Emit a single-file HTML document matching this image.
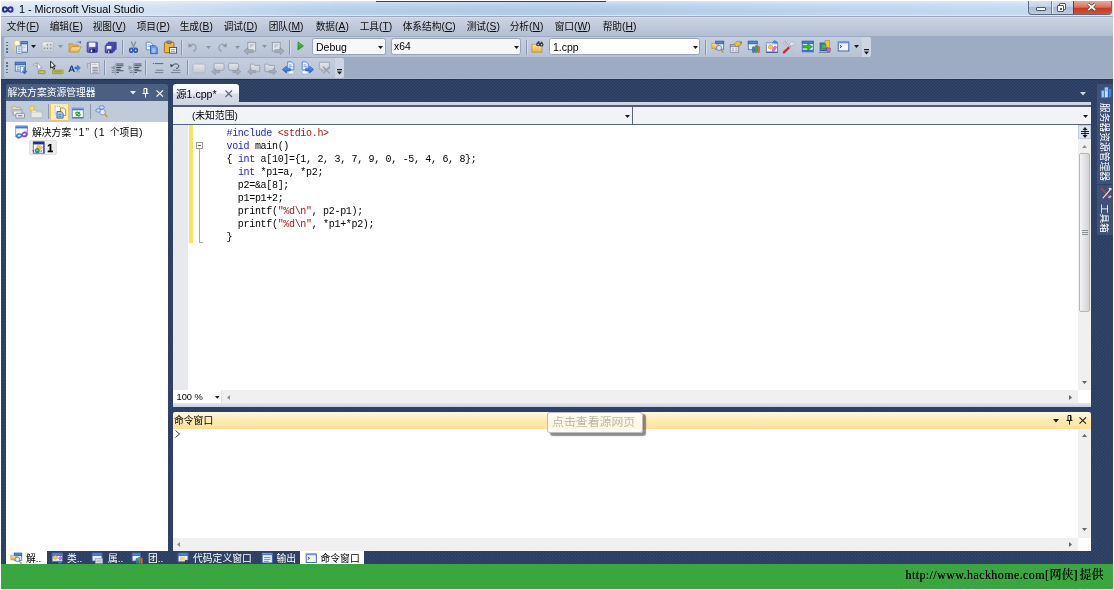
<!DOCTYPE html>
<html lang="zh-CN">
<head>
<meta charset="utf-8">
<title>1 - Microsoft Visual Studio</title>
<style>
*{box-sizing:border-box;margin:0;padding:0}
html,body{width:1114px;height:590px;overflow:hidden;background:#fff}
body{font-family:"Liberation Sans","Noto Sans CJK SC",sans-serif;font-size:9.8px;color:#000;position:relative}
body div,#w>span,body svg.ic,#w>pre{position:absolute}
#w{left:0;top:0;width:1114px;height:590px;will-change:transform}
svg.ic{overflow:visible}
.t{white-space:nowrap;line-height:14px;font-size:9.8px}
.m{white-space:nowrap;line-height:14px;font-size:9.7px;color:#0c0c0c}
.w{color:#fff}
#code{font-family:"Liberation Mono","Noto Sans CJK SC",monospace;font-size:10px;letter-spacing:-.32px;line-height:13px;white-space:pre;color:#000}
#code .k{color:#1a1ae6}#code .s{color:#a31515}
</style>
</head>
<body>
<div id="w">
<svg width="0" height="0" style="position:absolute"><defs>
<linearGradient id="gFold" x1="0" y1="0" x2="0" y2="1"><stop offset="0" stop-color="#fbe79a"/><stop offset="1" stop-color="#e3b43c"/></linearGradient>
<linearGradient id="gBlue" x1="0" y1="0" x2="1" y2="1"><stop offset="0" stop-color="#908ee4"/><stop offset="1" stop-color="#3b399c"/></linearGradient>
<linearGradient id="gWin" x1="0" y1="0" x2="0" y2="1"><stop offset="0" stop-color="#ffffff"/><stop offset="1" stop-color="#d5e1f5"/></linearGradient>
<linearGradient id="gTit" x1="0" y1="0" x2="0" y2="1"><stop offset="0" stop-color="#7aa7ea"/><stop offset="1" stop-color="#2f62c0"/></linearGradient>
<linearGradient id="gGray" x1="0" y1="0" x2="0" y2="1"><stop offset="0" stop-color="#e4e7ec"/><stop offset="1" stop-color="#c3c8d1"/></linearGradient>
<linearGradient id="gGreen" x1="0" y1="0" x2="0" y2="1"><stop offset="0" stop-color="#5fd34a"/><stop offset="1" stop-color="#1f8f1c"/></linearGradient>
<linearGradient id="gArrB" x1="0" y1="0" x2="0" y2="1"><stop offset="0" stop-color="#6fa4f0"/><stop offset="1" stop-color="#1c57c4"/></linearGradient>
</defs></svg>
<div style="left:1px;top:1px;width:1112px;height:16px;background:linear-gradient(90deg,#d6e4f3 0,#d0e0f1 14%,#b3ceea 30%,#abc9e8 50%,#b9d3ed 72%,#c6dbf0 100%)"></div>
<div style="left:1px;top:1px;width:1112px;height:16px;background:linear-gradient(180deg,rgba(255,255,255,.45) 0,rgba(255,255,255,.12) 30%,rgba(255,255,255,0) 60%,rgba(255,255,255,.1) 100%)"></div>
<div style="left:1px;top:15px;width:1112px;height:1px;background:#dde8f4"></div>
<div style="left:1px;top:16px;width:1112px;height:1px;background:#9aa7bd"></div>
<div style="left:376px;top:1px;width:229.5px;height:1px;background:#3d424b"></div>
<svg class="ic" style="left:2px;top:6px" width="11.5" height="7" viewBox="0 0 26 16"><path d="M13 8c-3-7-11-7-11 0s8 7 11 0z" fill="none" stroke="#232c86" stroke-width="4.4"/><path d="M13 8c3-7 11-7 11 0s-8 7-11 0z" fill="none" stroke="#3a2a90" stroke-width="4.4"/></svg>
<span class="t" style="left:19px;top:2px;font-size:10.8px;line-height:14px;color:#000">1 - Microsoft Visual Studio</span>
<div style="left:1028px;top:1px;width:84px;height:13.5px;border:1px solid #5d6b80;border-top:0;border-radius:0 0 4px 4px;background:linear-gradient(180deg,#d6e2f0 0,#c2d2e6 45%,#a9bdd6 50%,#bccde2 100%);overflow:hidden"><div style="left:22px;top:0;width:1px;height:14px;background:#6d7b90"></div><div style="left:23px;top:0;width:1px;height:14px;background:#e6eef8"></div><div style="left:44px;top:0;width:39px;height:14px;background:linear-gradient(180deg,#e9a99a 0,#d9705a 45%,#c43a20 50%,#d4583a 100%);border-left:1px solid #6d3b30"></div><div style="left:7px;top:6px;width:9.5px;height:3.5px;background:#fff;border:1px solid #4d586a;border-radius:1px"></div><div style="left:30px;top:2px;width:7px;height:7px;background:#fff;border:1px solid #4d586a;border-radius:1px"></div><div style="left:28px;top:4px;width:7px;height:7px;background:#fff;border:1px solid #4d586a;border-radius:1px"></div><div style="left:30.5px;top:6.5px;width:2px;height:2px;background:#4d586a"></div><svg class="ic" style="left:58px;top:2px" width="9.5" height="8" viewBox="0 0 11 9"><path d="M1.5 1l8 7M9.5 1l-8 7" stroke="#5a2a22" stroke-width="3.4"/><path d="M1.5 1l8 7M9.5 1l-8 7" stroke="#fff" stroke-width="2"/></svg></div>
<div style="left:1px;top:17px;width:1112px;height:19px;background:linear-gradient(180deg,#ccd5e3 0,#c2ccdc 40%,#b2bed1 100%)"></div>
<div style="left:1px;top:17px;width:1112px;height:1px;background:#d5dde9"></div>
<span class="m" style="left:6.7px;top:20px;">文件<span style="font-size:10.3px">(<u>F</u>)</span></span>
<span class="m" style="left:49.7px;top:20px;">编辑<span style="font-size:10.3px">(<u>E</u>)</span></span>
<span class="m" style="left:92.7px;top:20px;">视图<span style="font-size:10.3px">(<u>V</u>)</span></span>
<span class="m" style="left:136.7px;top:20px;">项目<span style="font-size:10.3px">(<u>P</u>)</span></span>
<span class="m" style="left:179.7px;top:20px;">生成<span style="font-size:10.3px">(<u>B</u>)</span></span>
<span class="m" style="left:223.7px;top:20px;">调试<span style="font-size:10.3px">(<u>D</u>)</span></span>
<span class="m" style="left:268.7px;top:20px;">团队<span style="font-size:10.3px">(<u>M</u>)</span></span>
<span class="m" style="left:315.7px;top:20px;">数据<span style="font-size:10.3px">(<u>A</u>)</span></span>
<span class="m" style="left:359.7px;top:20px;">工具<span style="font-size:10.3px">(<u>T</u>)</span></span>
<span class="m" style="left:402.7px;top:20px;">体系结构<span style="font-size:10.3px">(<u>C</u>)</span></span>
<span class="m" style="left:466.7px;top:20px;">测试<span style="font-size:10.3px">(<u>S</u>)</span></span>
<span class="m" style="left:509.7px;top:20px;">分析<span style="font-size:10.3px">(<u>N</u>)</span></span>
<span class="m" style="left:554.7px;top:20px;">窗口<span style="font-size:10.3px">(<u>W</u>)</span></span>
<span class="m" style="left:602.7px;top:20px;">帮助<span style="font-size:10.3px">(<u>H</u>)</span></span>
<div style="left:1px;top:36px;width:1112px;height:43px;background:#9dabc3"></div>
<div style="left:4px;top:36.5px;width:867px;height:20px;background:linear-gradient(180deg,#c4cede 0,#bdc8d9 60%,#b7c2d5 100%);border-radius:2.5px"></div>
<div style="left:862px;top:36.5px;width:9px;height:20px;background:#cdd5e3;border-radius:0 2.5px 2.5px 0"></div>
<div style="left:4px;top:58px;width:339.5px;height:19.5px;background:linear-gradient(180deg,#c4cede 0,#bdc8d9 60%,#b7c2d5 100%);border-radius:2.5px"></div>
<div style="left:335px;top:58px;width:8.5px;height:19.5px;background:#cdd5e3;border-radius:0 2.5px 2.5px 0"></div>
<div style="left:6.3px;top:41.5px;width:1.6px;height:1.6px;background:#5f6d88"></div>
<div style="left:6.3px;top:44.8px;width:1.6px;height:1.6px;background:#5f6d88"></div>
<div style="left:6.3px;top:48.1px;width:1.6px;height:1.6px;background:#5f6d88"></div>
<div style="left:6.3px;top:51.4px;width:1.6px;height:1.6px;background:#5f6d88"></div>
<div style="left:6.3px;top:62.0px;width:1.6px;height:1.6px;background:#5f6d88"></div>
<div style="left:6.3px;top:65.3px;width:1.6px;height:1.6px;background:#5f6d88"></div>
<div style="left:6.3px;top:68.6px;width:1.6px;height:1.6px;background:#5f6d88"></div>
<div style="left:6.3px;top:71.9px;width:1.6px;height:1.6px;background:#5f6d88"></div>
<svg class="ic" style="left:13.5px;top:39.5px;" width="13.5" height="13.5" viewBox="0 0 16 16"><rect x=".6" y=".6" width="7" height="12.4" rx=".8" fill="#f2d768"/><circle cx="3.8" cy="3.8" r="2.6" fill="#fffbe0"/><circle cx="3.8" cy="3.8" r="1.3" fill="#fff"/><rect x="8.3" y="2" width="7.7" height="12.4" fill="url(#gWin)" stroke="#35579f" stroke-width=".9"/><rect x="8.3" y="2" width="7.7" height="2.8" fill="url(#gTit)" stroke="#35579f" stroke-width=".6"/><path d="M10 7h4.5M10 9h4.5" stroke="#9bb4e0" stroke-width=".7"/><rect x="3" y="7.2" width="6.3" height="8.6" rx=".6" fill="#eaf1fc" stroke="#5a7fc8" stroke-width=".9"/><path d="M4.5 9.5h3.3M4.5 11.5h3.3M4.5 13.5h3.3" stroke="#6a8fd8" stroke-width=".9"/></svg>
<svg class="ic" style="left:31px;top:45px" width="5" height="3" viewBox="0 0 5 3"><path d="M0 0h5L2.5 3z" fill="#1a1a1a"/></svg>
<svg class="ic" style="left:41px;top:41px;" width="13" height="13" viewBox="0 0 16 16"><rect x="1.2" y=".800" width="13.8" height="12.4" rx=".6" fill="url(#gGray)" stroke="#b4b9c4" stroke-width=".8"/><path d="M3 3h3.5M3 4.8h2" stroke="#f4f5f8" stroke-width="1.1"/><circle cx="8" cy="4.5" r=".9" fill="#7d8492"/><circle cx="12" cy="4.5" r=".9" fill="#7d8492"/><circle cx="4.3" cy="9" r=".9" fill="#7d8492"/><circle cx="8" cy="9" r=".9" fill="#7d8492"/><circle cx="12" cy="9" r=".9" fill="#7d8492"/></svg>
<svg class="ic" style="left:58px;top:45px" width="5" height="3" viewBox="0 0 5 3"><path d="M0 0h5L2.5 3z" fill="#8a93a3"/></svg>
<svg class="ic" style="left:68px;top:40px;" width="13.5" height="13.5" viewBox="0 0 16 16"><path d="M1 4.5h4.5l1.2 1.5H12v2H4.5L1.5 14z" fill="#e5b93f" stroke="#b98a1c" stroke-width=".8"/><path d="M4.2 8h11.3l-3 6.3H1.3z" fill="url(#gFold)" stroke="#b98a1c" stroke-width=".8"/><path d="M10 3.2c1.5-1.6 3.3-1.5 4.3-.2" fill="none" stroke="#7d90bc" stroke-width="1.1"/><path d="M15.6 1l-.3 3.3-3-1.2z" fill="#5d74ac"/></svg>
<svg class="ic" style="left:85.7px;top:40.5px;" width="12.5" height="12.5" viewBox="0 0 16 16"><rect x="1.5" y="1.5" width="13" height="13" rx="1" fill="url(#gBlue)" stroke="#2f2d86"/><rect x="4" y="2" width="8" height="5.5" fill="#f4f6ff"/><rect x="4.5" y="10" width="7" height="4.5" fill="#1b1e6e"/><rect x="6" y="11" width="2" height="3" fill="#f0f0ff"/></svg>
<svg class="ic" style="left:103.5px;top:40.5px;" width="13" height="13" viewBox="0 0 16 16"><path d="M5 1.5h10v9l-2 0v-7h-8z" fill="#4a50c0" stroke="#2f2d86" stroke-width=".8"/><path d="M3 3.5h10v9h-2v-7H3z" fill="#5a60d0" stroke="#2f2d86" stroke-width=".8"/><rect x="1.5" y="5.5" width="9.5" height="9" rx=".8" fill="url(#gBlue)" stroke="#2f2d86"/><rect x="3.5" y="6" width="5.5" height="3.5" fill="#f4f6ff"/><rect x="4" y="11.5" width="5" height="3" fill="#1b1e6e"/><rect x="5" y="12" width="1.6" height="2.4" fill="#f0f0ff"/></svg>
<div style="left:121.5px;top:39.5px;width:1px;height:15px;background:#8996ad"></div>
<div style="left:122.5px;top:39.5px;width:1px;height:15px;background:#d3dae6"></div>
<svg class="ic" style="left:127px;top:40.5px;" width="13" height="13" viewBox="0 0 16 16"><path d="M5.2 0.5L8.6 8.5M10.8 .5L7.4 8.5" stroke="#848d9e" stroke-width="1.7" fill="none"/><ellipse cx="5.3" cy="11.3" rx="2.2" ry="2.7" fill="#5a7cd0" stroke="#2f52b0" stroke-width="1.5"/><ellipse cx="10.7" cy="11.3" rx="2.2" ry="2.7" fill="#5a7cd0" stroke="#2f52b0" stroke-width="1.5"/><circle cx="5.3" cy="11.6" r=".8" fill="#cfdcf6"/><circle cx="10.7" cy="11.6" r=".8" fill="#cfdcf6"/></svg>
<svg class="ic" style="left:145px;top:40.5px;" width="13.5" height="13.5" viewBox="0 0 16 16"><path d="M1.5 1.5h5l2.5 2.5v6.5h-7.5z" fill="#f2f6fd" stroke="#5b82c8"/><path d="M3 4.5h3M3 6.5h4" stroke="#7b9bd6" stroke-width=".9"/><path d="M6.5 5.5h5.5l2.5 2.5v7h-8z" fill="#6c9bea" stroke="#2d5fc0"/><path d="M8.5 9.5h4M8.5 11.5h4M8.5 13h3" stroke="#dbe7fb" stroke-width=".9"/></svg>
<svg class="ic" style="left:163px;top:39.5px;" width="14" height="14" viewBox="0 0 16 16"><rect x="1.5" y="2.5" width="11" height="12" rx="1" fill="#e8b93a" stroke="#9a6a10"/><rect x="4.5" y="1" width="5" height="3" rx=".8" fill="#8b8f98" stroke="#50545c" stroke-width=".7"/><rect x="7.5" y="8.5" width="8" height="6.5" fill="#f7f9fd" stroke="#3e4a66"/><path d="M9 11h5M9 13h5" stroke="#7b8bb0" stroke-width=".9"/></svg>
<div style="left:181.0px;top:39.5px;width:1px;height:15px;background:#8996ad"></div>
<div style="left:182.0px;top:39.5px;width:1px;height:15px;background:#d3dae6"></div>
<svg class="ic" style="left:187px;top:41px;" width="12" height="12" viewBox="0 0 16 16"><path d="M3.5 6.5c3-3.5 8-2.5 8.5 1.5c.3 3-1.5 5-3.5 6" fill="none" stroke="#9aa3b3" stroke-width="1.8"/><path d="M1.5 2.5l.5 6 5.5-1.5z" fill="#8d96a8"/></svg>
<svg class="ic" style="left:206px;top:45.5px" width="5" height="3" viewBox="0 0 5 3"><path d="M0 0h5L2.5 3z" fill="#8a93a3"/></svg>
<svg class="ic" style="left:215.5px;top:41px;" width="12" height="12" viewBox="0 0 16 16"><path d="M12.5 6.5c-3-3.5-8-2.5-8.5 1.5c-.3 3 1.5 5 3.5 6" fill="none" stroke="#9aa3b3" stroke-width="1.8"/><path d="M14.5 2.5l-.5 6-5.5-1.5z" fill="#8d96a8"/></svg>
<svg class="ic" style="left:234.5px;top:45.5px" width="5" height="3" viewBox="0 0 5 3"><path d="M0 0h5L2.5 3z" fill="#8a93a3"/></svg>
<svg class="ic" style="left:243px;top:40.5px;" width="14" height="14" viewBox="0 0 16 16"><rect x="5.5" y="1.5" width="9" height="10" fill="#dfe3ea" stroke="#8e96a6"/><path d="M8 4.5h4M8 6.5h2" stroke="#a0a7b4"/><path d="M1 11.5l4.5-4v2.5h6v3h-6v2.5z" fill="#a4abb9" stroke="#868e9e" stroke-width=".7"/></svg>
<svg class="ic" style="left:261.5px;top:45px" width="5" height="3" viewBox="0 0 5 3"><path d="M0 0h5L2.5 3z" fill="#8a93a3"/></svg>
<svg class="ic" style="left:270.5px;top:40.5px;" width="14" height="14" viewBox="0 0 16 16"><rect x="1.5" y="1.5" width="9" height="10" fill="#dfe3ea" stroke="#8e96a6"/><path d="M4 4.5h4M4 6.5h2" stroke="#a0a7b4"/><path d="M15 11.5l-4.5-4v2.5h-6v3h6v2.5z" fill="#a4abb9" stroke="#868e9e" stroke-width=".7"/></svg>
<div style="left:288.5px;top:39.5px;width:1px;height:15px;background:#8996ad"></div>
<div style="left:289.5px;top:39.5px;width:1px;height:15px;background:#d3dae6"></div>
<svg class="ic" style="left:295px;top:40.3px;" width="11.8" height="11.8" viewBox="0 0 16 16"><path d="M4 2.5l7.5 5.5-7.5 5.5z" fill="url(#gGreen)" stroke="#1c7a18" stroke-width=".8"/></svg>
<div style="left:312.3px;top:38.3px;width:73.4px;height:17.2px;border:1px solid #97a4bc;border-radius:2.5px;background:#f6f8fb"></div>
<span class="t" style="left:316px;top:40px;font-size:10.5px;line-height:14px">Debug</span>
<svg class="ic" style="left:377.5px;top:45.5px" width="5" height="3" viewBox="0 0 5 3"><path d="M0 0h5L2.5 3z" fill="#1a1a1a"/></svg>
<div style="left:390.8px;top:38.3px;width:129.9px;height:17.2px;border:1px solid #97a4bc;border-radius:2.5px;background:#f4f6fa"></div>
<span class="t" style="left:394px;top:40px;font-size:10.3px;line-height:14px">x64</span>
<svg class="ic" style="left:513.5px;top:45.5px" width="5" height="3" viewBox="0 0 5 3"><path d="M0 0h5L2.5 3z" fill="#1a1a1a"/></svg>
<div style="left:526.0px;top:39.5px;width:1px;height:15px;background:#8996ad"></div>
<div style="left:527.0px;top:39.5px;width:1px;height:15px;background:#d3dae6"></div>
<svg class="ic" style="left:531px;top:40px;" width="13.5" height="13.5" viewBox="0 0 16 16"><path d="M1 5h4.5l1.2 1.5H13v8H1z" fill="url(#gFold)" stroke="#b98a1c" stroke-width=".8"/><circle cx="8.5" cy="5" r="2.3" fill="#30343c"/><circle cx="12.5" cy="5.5" r="2.3" fill="#30343c"/><rect x="8" y="1.5" width="2" height="3" fill="#30343c"/><rect x="11.5" y="2" width="2" height="3" fill="#30343c"/><circle cx="8.5" cy="5.2" r=".9" fill="#cfe0ff"/><circle cx="12.5" cy="5.7" r=".9" fill="#cfe0ff"/></svg>
<div style="left:549.3px;top:38.3px;width:150.9px;height:17.2px;border:1px solid #97a4bc;border-radius:2.5px;background:#fff"></div>
<span class="t" style="left:553px;top:40px;font-size:10.5px;line-height:14px">1.cpp</span>
<svg class="ic" style="left:693px;top:45.5px" width="5" height="3" viewBox="0 0 5 3"><path d="M0 0h5L2.5 3z" fill="#1a1a1a"/></svg>
<div style="left:705.0px;top:39.5px;width:1px;height:15px;background:#8996ad"></div>
<div style="left:706.0px;top:39.5px;width:1px;height:15px;background:#d3dae6"></div>
<svg class="ic" style="left:711px;top:39.5px;" width="13.5" height="13.5" viewBox="0 0 16 16"><rect x="5.5" y="1.5" width="9.5" height="9.5" fill="url(#gWin)" stroke="#4f74b8" stroke-width="1"/><rect x="5.5" y="1.5" width="9.5" height="3" fill="url(#gTit)" stroke="#3560b4" stroke-width="1"/><path d="M1 4h4l1 1.2h3v4.8H1z" fill="url(#gFold)" stroke="#b98a1c" stroke-width=".7"/><circle cx="9.5" cy="9.5" r="3" fill="#d9ecfb" fill-opacity=".85" stroke="#5a86c8" stroke-width="1.1"/><path d="M11.8 11.8l3 3" stroke="#c8922a" stroke-width="1.8"/></svg>
<svg class="ic" style="left:728.5px;top:39.5px;" width="13.5" height="13.5" viewBox="0 0 16 16"><rect x="1.5" y="5.5" width="10" height="9" fill="#eef0f4" stroke="#7d8696"/><rect x="1.5" y="5.5" width="10" height="2.5" fill="#aab2c2" stroke="#7d8696"/><path d="M3.5 10.5h2.5M3.5 12.5h2.5M7.5 10.5h2.5M7.5 12.5h2.5" stroke="#8d96a6"/><path d="M6.5 4.5c1-2.5 4-3.5 6.5-2.5l2 1-1.5 3.5c-2 .5-3.5.5-5 1.5z" fill="#e9c04a" stroke="#a87c18" stroke-width=".7"/><path d="M13 1.5l2.5 1-1.2 3z" fill="#3c9a3a"/></svg>
<svg class="ic" style="left:746.5px;top:39.5px;" width="13.5" height="13.5" viewBox="0 0 16 16"><rect x="1.5" y="1.5" width="10.5" height="10" fill="url(#gWin)" stroke="#4f74b8" stroke-width="1"/><rect x="1.5" y="1.5" width="10.5" height="3" fill="url(#gTit)" stroke="#3560b4" stroke-width="1"/><rect x="6.5" y="8" width="2.4" height="7" rx="1" fill="#3f7fe0" stroke="#1f4fa8" stroke-width=".6"/><rect x="9.5" y="6.5" width="2.4" height="8.5" rx="1" fill="#4fb24a" stroke="#2a7a28" stroke-width=".6"/><rect x="12.5" y="7.5" width="2.4" height="7.5" rx="1" fill="#e2703a" stroke="#a8481c" stroke-width=".6"/></svg>
<svg class="ic" style="left:764.5px;top:39.5px;" width="13.5" height="13.5" viewBox="0 0 16 16"><rect x="1.5" y="3.5" width="13.5" height="11" fill="#f7f9fd" stroke="#5a74a8"/><path d="M1.5 14.5h13.5" stroke="#3d5080" stroke-width="1.3"/><rect x="1.5" y="3.5" width="13.5" height="2" fill="#c9d8f2"/><path d="M4 7.5l2.3-1.7 2.7 1.2.3 2.5-2.3 1.2-2.7-.8z" fill="#f0cc4e" stroke="#b08a14" stroke-width=".6"/><path d="M8.5 11.5l3-4.5 2.5 1.5-3 4.5-2.2.3z" fill="#e070e0" stroke="#a83aa8" stroke-width=".6"/><path d="M8.5 3.5l2.5-3 3 1.5 1 2z" fill="#4f8ae8" stroke="#2a5cc0" stroke-width=".5"/></svg>
<svg class="ic" style="left:782px;top:39.5px;" width="14" height="14" viewBox="0 0 16 16"><path d="M4 4L13.5 14" stroke="#aab2c0" stroke-width="2.2" stroke-linecap="round"/><path d="M4 4L13.5 14" stroke="#e9ecf1" stroke-width=".9" stroke-linecap="round"/><path d="M1.2 3.5c0-1.5 1.5-2.7 3-2.3l-1.5 1.7 1.2 1.2 1.7-1.5c.4 1.5-.8 3-2.3 3z" fill="#d3d8e0" stroke="#8d96a6" stroke-width=".5"/><path d="M2.2 14.2L8 8.5" stroke="#c8262a" stroke-width="2.6" stroke-linecap="round"/><path d="M8 8.5l2.5-2.5" stroke="#aab2c0" stroke-width="1.8"/><path d="M8.3 4.7l3-3.2 3.7 3.6-1.3 1.4-1.4-1.2-1.8 1.8z" fill="#e4e8ee" stroke="#8d96a6" stroke-width=".6"/></svg>
<svg class="ic" style="left:800.5px;top:39.5px;" width="13.5" height="13.5" viewBox="0 0 16 16"><rect x="1.5" y="1.5" width="13" height="12.5" fill="#e9f0fb" stroke="#2f5cb4"/><rect x="1.5" y="1.5" width="13" height="2.5" fill="url(#gTit)" stroke="#2f5cb4"/><rect x="1.5" y="11.5" width="13" height="2.5" fill="#3f6cc4"/><path d="M2.5 6.5h5.5v-2.5l5.5 4-5.5 4v-2.5h-5.5z" fill="#2fc02a" stroke="#147a12" stroke-width=".7"/></svg>
<svg class="ic" style="left:818px;top:39.5px;" width="13.5" height="13.5" viewBox="0 0 16 16"><rect x="2.5" y="3.5" width="8" height="9" fill="#3f8fd8" stroke="#1f559c"/><rect x="8.5" y=".8" width="5" height="8" fill="#f0c83a" stroke="#b08a14" stroke-width=".7"/><rect x="4.5" y="5.5" width="5" height="5" fill="#4fb44a" stroke="#2a7a28" stroke-width=".6"/><rect x="10.5" y="9.5" width="4" height="4" fill="#d55fd2" stroke="#94308f" stroke-width=".6"/><path d="M1 14.5h13.5" stroke="#6d6f8a" stroke-width="1.2"/></svg>
<svg class="ic" style="left:836.5px;top:40px;" width="13" height="13" viewBox="0 0 16 16"><rect x="1.5" y="2.5" width="13" height="11" fill="#f3f7fd" stroke="#3d63ad" stroke-width="1.2"/><rect x="1.5" y="2.5" width="13" height="1.6" fill="#6d93d8"/><path d="M3.5 6.5l2.2 1.6-2.2 1.6" fill="none" stroke="#20242c" stroke-width="1.1"/></svg>
<svg class="ic" style="left:853.5px;top:45px" width="5" height="3" viewBox="0 0 5 3"><path d="M0 0h5L2.5 3z" fill="#1a1a1a"/></svg>
<svg class="ic" style="left:863.5px;top:49px" width="5" height="6" viewBox="0 0 5 6"><path d="M0 .600h5" stroke="#1a1a1a" stroke-width="1.2"/><path d="M0 2.5h5L2.5 5.5z" fill="#1a1a1a"/></svg>
<svg class="ic" style="left:14px;top:60.5px;" width="13.5" height="13.5" viewBox="0 0 16 16"><rect x="1.5" y="1.5" width="12" height="10.5" fill="url(#gWin)" stroke="#4f74b8" stroke-width="1"/><rect x="1.5" y="1.5" width="12" height="3" fill="url(#gTit)" stroke="#3560b4" stroke-width="1"/><path d="M3.5 6h3M3.5 8h3M3.5 10h3" stroke="#5b82c8" stroke-width=".9"/><rect x="7.5" y="6.5" width="5" height="7" fill="#f5f8fd" stroke="#5b82c8" stroke-width=".8"/><path d="M13 8v4h-2l3 3.5 3-3.5h-2v-4z" transform="translate(-1.5 0)" fill="url(#gArrB)" stroke="#1c4fa8" stroke-width=".5"/></svg>
<svg class="ic" style="left:32px;top:60.5px;" width="13.5" height="13.5" viewBox="0 0 16 16"><path d="M1.5 3.5h4v-2l3 3-3 3v-2h-4z" fill="#dfe4ec" stroke="#8d96a6" stroke-width=".7"/><path d="M6.5 2.5l5.5 5.5h-2.5l1.5 3-1.3.600-1.5-3-1.7 1.7z" fill="#fff" stroke="#8d96a6" stroke-width=".8"/><rect x="7.5" y="11.5" width="8" height="3.5" rx=".6" fill="#c8c860" stroke="#7c7c2a" stroke-width=".8"/></svg>
<svg class="ic" style="left:50px;top:60.5px;" width="13.5" height="13.5" viewBox="0 0 16 16"><path d="M.800 .300l5.6 5.8h-2.5l1.6 3.3-1.3.600-1.6-3.3-1.8 1.7z" fill="#fff" stroke="#10141c" stroke-width="1.1"/><rect x="3" y="10.8" width="12.5" height="4.2" rx=".6" fill="#c4d040" stroke="#7c862a" stroke-width=".8"/><path d="M5 12.9h8.5" stroke="#6a7420" stroke-width=".9"/></svg>
<svg class="ic" style="left:68px;top:61px;" width="13" height="13" viewBox="0 0 16 16"><path d="M.500 13.5L3.7 5.5h1.6L8.5 13.5h-1.8l-.7-1.9H3l-.7 1.9z M3.5 10.2h2L4.5 7.4z" fill="#1f3a8a" fill-rule="evenodd"/><path d="M8.5 7.3h3v-2.2l3.8 3.4-3.8 3.4v-2.2h-3z" fill="#3f7fe0" stroke="#1c4fa8" stroke-width=".5"/><path d="M9.5 13.3h5" stroke="#8d96a6" stroke-width=".8"/></svg>
<svg class="ic" style="left:86px;top:60.5px;" width="13.5" height="13.5" viewBox="0 0 16 16"><path d="M1.5 3v6" stroke="#969eac"/><path d="M1.5 3h3" stroke="#969eac"/><rect x="5.5" y="1.5" width="10" height="13.5" fill="#eceef2" stroke="#969eac"/><path d="M7 4h6" stroke="#b4bac6"/><path d="M7.5 7.5h6.5M7.5 9.5h6.5M7.5 11.5h6.5M7.5 13.3h6.5" stroke="#7d8492" stroke-width="1.1"/></svg>
<div style="left:103.8px;top:60px;width:1px;height:15px;background:#8996ad"></div>
<div style="left:104.8px;top:60px;width:1px;height:15px;background:#d3dae6"></div>
<svg class="ic" style="left:110px;top:61.5px;" width="13.5" height="13.5" viewBox="0 0 16 16"><path d="M6.5 .500v15" stroke="#5d6676" stroke-width=".7" stroke-dasharray="1 1"/><path d="M7.5 2.5h8.5M7.5 4.5h8.5M7.5 6.5h6M7.5 8.5h5M7.5 10.5h8.5M7.5 12.5h3" stroke="#474f5e" stroke-width="1.2"/><path d="M2 10.5h3.5M2 12.5h3.5" stroke="#7d8696" stroke-width="1.2"/><path d="M5.7 4.2v5l-5-2.5z" fill="#8a93a3"/></svg>
<svg class="ic" style="left:128px;top:61.5px;" width="13.5" height="13.5" viewBox="0 0 16 16"><path d="M6.5 .500v15" stroke="#5d6676" stroke-width=".7" stroke-dasharray="1 1"/><path d="M7.5 2.5h8.5M7.5 4.5h8.5M7.5 6.5h6M7.5 8.5h5M7.5 10.5h8.5M7.5 12.5h3" stroke="#474f5e" stroke-width="1.2"/><path d="M2 10.5h3.5M2 12.5h3.5" stroke="#7d8696" stroke-width="1.2"/><path d="M.700 4.2v5l5-2.5z" fill="#8a93a3"/></svg>
<div style="left:144.8px;top:60px;width:1px;height:15px;background:#8996ad"></div>
<div style="left:145.8px;top:60px;width:1px;height:15px;background:#d3dae6"></div>
<svg class="ic" style="left:151.5px;top:62px;" width="12.5" height="12.5" viewBox="0 0 16 16"><path d="M1 2h1.5M3.5 2h11" stroke="#4d5666" stroke-width="1.1"/><path d="M5 10.5h9.5M3.5 13.5h11" stroke="#6d7686" stroke-width="1.1"/></svg>
<svg class="ic" style="left:169px;top:62px;" width="12.5" height="12.5" viewBox="0 0 16 16"><path d="M4 5.5c1.5-4 8-4 8.5-.5c.3 2.5-2 3.5-3.5 3" fill="none" stroke="#3d4656" stroke-width="1.2"/><path d="M1.5 2.5l.8 4.5 3.7-2.8z" fill="#3d4656"/><path d="M5 10.5h9.5M2.5 13.5h12" stroke="#6d7686" stroke-width="1.1"/></svg>
<div style="left:186.8px;top:60px;width:1px;height:15px;background:#8996ad"></div>
<div style="left:187.8px;top:60px;width:1px;height:15px;background:#d3dae6"></div>
<svg class="ic" style="left:192px;top:61.5px;" width="14" height="13" viewBox="0 0 16 16"><rect x=".500" y="2.5" width="15" height="11" rx="2" fill="url(#gGray)" stroke="#aab0bd"/></svg>
<svg class="ic" style="left:210.5px;top:61.5px;" width="13.5" height="13.5" viewBox="0 0 16 16"><rect x="3.5" y="1.5" width="12" height="8.5" rx="2" fill="url(#gGray)" stroke="#969eac"/><path d="M.800 11.5l4.2-3.7v2.4h5v2.6h-5v2.4z" fill="#a4abb9" stroke="#868e9e" stroke-width=".6"/></svg>
<svg class="ic" style="left:228px;top:61.5px;" width="13.5" height="13.5" viewBox="0 0 16 16"><rect x=".500" y="1.5" width="12" height="8.5" rx="2" fill="url(#gGray)" stroke="#969eac"/><path d="M15.2 11.5l-4.2-3.7v2.4h-5v2.6h5v2.4z" fill="#a4abb9" stroke="#868e9e" stroke-width=".6"/></svg>
<svg class="ic" style="left:246.5px;top:61.5px;" width="13.5" height="13.5" viewBox="0 0 16 16"><path d="M4 2.5h4l1 1.5h6v7.5H4z" fill="url(#gGray)" stroke="#969eac"/><path d="M.800 11.5l4.2-3.7v2.4h5v2.6h-5v2.4z" fill="#a4abb9" stroke="#868e9e" stroke-width=".6"/></svg>
<svg class="ic" style="left:264px;top:61.5px;" width="13.5" height="13.5" viewBox="0 0 16 16"><path d="M1 2.5h4l1 1.5h6.5v7.5H1z" fill="url(#gGray)" stroke="#969eac"/><path d="M15.2 11.5l-4.2-3.7v2.4h-5v2.6h5v2.4z" fill="#a4abb9" stroke="#868e9e" stroke-width=".6"/></svg>
<svg class="ic" style="left:282px;top:60.5px;" width="14" height="14" viewBox="0 0 16 16"><path d="M6.5 1h4.5l2.5 2.5v6.5h-7z" fill="#eef4fd" stroke="#3f72d0" stroke-width=".9"/><path d="M8 4.5h3M8 6.5h4" stroke="#5b8be0" stroke-width=".9"/><rect x="7" y="11" width="6.5" height="3.8" rx=".8" fill="#fff" stroke="#7fa4e8" stroke-width=".7"/><path d="M.300 9.8l4.7-4v2.4h4.5v3.2H5v2.4z" fill="url(#gArrB)" stroke="#1c4fa8" stroke-width=".6"/></svg>
<svg class="ic" style="left:299.5px;top:60.5px;" width="14" height="14" viewBox="0 0 16 16"><path d="M2.5 1h4.5l2.5 2.5v6.5h-7z" fill="#eef4fd" stroke="#3f72d0" stroke-width=".9"/><path d="M4 4.5h3M4 6.5h4" stroke="#5b8be0" stroke-width=".9"/><rect x="2.5" y="11" width="6.5" height="3.8" rx=".8" fill="#fff" stroke="#7fa4e8" stroke-width=".7"/><path d="M15.7 9.8l-4.7-4v2.4h-4.5v3.2H11v2.4z" fill="url(#gArrB)" stroke="#1c4fa8" stroke-width=".6"/></svg>
<svg class="ic" style="left:318px;top:61px;" width="13.5" height="13.5" viewBox="0 0 16 16"><path d="M1.5 1.5h12v8h-5l-4 3v-3h-3z" fill="url(#gGray)" stroke="#969eac"/><path d="M6 6.5l8 8.5M14 6.5l-8 8.5" stroke="#9aa1ae" stroke-width="1.5"/></svg>
<svg class="ic" style="left:336.5px;top:69px" width="5" height="6" viewBox="0 0 5 6"><path d="M0 .600h5" stroke="#1a1a1a" stroke-width="1.2"/><path d="M0 2.5h5L2.5 5.5z" fill="#1a1a1a"/></svg>
<div style="left:1px;top:78px;width:1112px;height:1px;background:#a9b5cb"></div>
<div style="left:1px;top:79px;width:1112px;height:486px;background-color:#293b5e;background-image:radial-gradient(circle at 0.8px 0.8px,#34486e 0.5px,rgba(52,72,110,0) 1.250px),radial-gradient(circle at 2.425px 2.425px,#34486e 0.5px,rgba(52,72,110,0) 1.250px);background-size:3.250px 3.250px"></div>
<div style="left:1px;top:79px;width:1112px;height:1px;background:rgba(20,30,60,.45)"></div>
<div style="left:6px;top:84px;width:162px;height:17px;background:#4b5f82;border-radius:2px 2px 0 0"></div>
<span class="t w" style="left:7.5px;top:85.5px;">解决方案资源管理器</span>
<svg class="ic" style="left:129.5px;top:91px" width="6" height="3.5" viewBox="0 0 6 3.5"><path d="M0 0h6L3.0 3.5z" fill="#e8ecf4"/></svg>
<svg class="ic" style="left:142px;top:87.5px" width="7" height="10" viewBox="0 0 7 10"><path d="M2 .500h3v5h-3zM.500 5.5h6M3.5 5.5v4" fill="none" stroke="#fff" stroke-width="1"/><path d="M4.5 1v4" stroke="#fff" stroke-width="1"/></svg>
<svg class="ic" style="left:155.5px;top:89.5px" width="7.5" height="7" viewBox="0 0 7.5 7"><path d="M.500 .300l6.5 6.4M7 .300L.500 6.7" stroke="#fff" stroke-width="1.1"/></svg>
<div style="left:6px;top:101px;width:162px;height:21px;background:#bfcadb"></div>
<svg class="ic" style="left:11px;top:104.5px;" width="14" height="14" viewBox="0 0 16 16"><path d="M1 1.5h4l1 1.2h5v6H1z" fill="#e4dcb8" stroke="#a8a48c" stroke-width=".8"/><rect x="2.5" y="5.5" width="10" height="6" fill="#eef0f4" stroke="#8d96a6"/><rect x="2.5" y="5.5" width="10" height="2" fill="#b8bfcc"/><rect x="5.5" y="9.5" width="10" height="5.5" rx="1" fill="#e6e9ef" stroke="#7d8696"/><path d="M8 12.3h5" stroke="#5d6676" stroke-width="1"/></svg>
<svg class="ic" style="left:29px;top:104.5px;" width="14" height="14" viewBox="0 0 16 16"><path d="M2.5 5.5h4.5l1 1.5h7v7.5h-12.5z" fill="url(#gWin)" stroke="#b4b8c0"/><path d="M2.5 8h12.5v6.5H2.5z" fill="#e9e9e4" stroke="#b0b2b0" stroke-width=".6"/><path d="M3.5 0l1.1 2.3 2.4.4-1.8 1.7.5 2.5-2.2-1.2-2.2 1.2.5-2.5L0 2.7l2.4-.4z" fill="#ffe25a" stroke="#e0a81c" stroke-width=".5"/></svg>
<div style="left:47.5px;top:104px;width:1px;height:15px;background:#8d9ab2"></div>
<div style="left:50px;top:103px;width:18.5px;height:17.5px;background:#fdedb3;border:1px solid #e6c66a;border-radius:1.5px"></div>
<svg class="ic" style="left:52.5px;top:105px;" width="14" height="14" viewBox="0 0 16 16"><path d="M2.5 1.5h6v9h-6z" fill="#fbfcfe" stroke="#9aa3b3" stroke-dasharray="1.2 1"/><path d="M8.5 3.5h4l2 2v6.5h-6z" fill="#fdf2cc" stroke="#8d7a4a" stroke-width=".8"/><path d="M4.5 7.5h5l2 2v5.5h-7z" fill="#a9c4f0" stroke="#3f62a8"/><path d="M6 11h3.5M6 13h3.5" stroke="#3f62a8" stroke-width=".8"/></svg>
<svg class="ic" style="left:71px;top:105.5px;" width="13.5" height="13.5" viewBox="0 0 16 16"><rect x="1.5" y="2.5" width="13" height="11.5" fill="#fbfcfe" stroke="#5a7fc8" stroke-width=".9"/><rect x="1.5" y="2.5" width="13" height="2.6" fill="url(#gTit)"/><path d="M1.5 14h13" stroke="#2f5cb4" stroke-width="1.1"/><path d="M4.8 9.3c0-2.6 3-3.6 5-2l1-1v3.5H7.3l1.2-1.2c-1-.8-2.3-.3-2.3.9z" fill="#2fa82a"/><path d="M11.7 9.7c0 2.6-3 3.6-5 2l-1 1V9.2h3.5l-1.2 1.2c1 .8 2.3.3 2.3-.9z" fill="#2fa82a"/></svg>
<div style="left:89.5px;top:104px;width:1px;height:15px;background:#8d9ab2"></div>
<svg class="ic" style="left:94.5px;top:105px;" width="13.5" height="13.5" viewBox="0 0 16 16"><ellipse cx="4" cy="6.5" rx="3" ry="2" fill="#cfe0fb" stroke="#4f7fd0"/><ellipse cx="8" cy="2.8" rx="3" ry="2" fill="#cfe0fb" stroke="#4f7fd0"/><circle cx="9" cy="8.5" r="3.3" fill="#e6f2fd" fill-opacity=".9" stroke="#7d8fb0" stroke-width="1.1"/><path d="M11.5 11l3.5 3.5" stroke="#d89a2a" stroke-width="2"/></svg>
<div style="left:6px;top:122px;width:162px;height:429px;background:#fff"></div>
<svg class="ic" style="left:15px;top:124.5px;" width="13.5" height="13.5" viewBox="0 0 16 16"><path d="M.800 1h14v9.5l-1.5 3.5h-12.5z" fill="#fbfcff" stroke="#6d7fae" stroke-width=".9"/><rect x=".800" y="1" width="14" height="3" fill="url(#gTit)"/><path d="M9.5 9.5l5-5v6.5z" fill="#c9a8e8" fill-opacity=".5"/><g transform="translate(8 12) rotate(-16)" fill="none" stroke-width="2"><path d="M0 0c-1.6-3-6-3-6 0s4.4 3 6 0" stroke="#2a8ad8"/><path d="M0 0c1.6-3 6-3 6 0s-4.4 3-6 0" stroke="#8a44c8"/></g></svg>
<span class="t" style="left:32px;top:124.5px;">解决方案 <span style="font-size:10.5px;letter-spacing:1.1px">“1” (1 </span>个项目<span style="font-size:10.5px">)</span></span>
<div style="left:29px;top:139.5px;width:27.5px;height:15.5px;background:#ebecf0;border:1px solid #dddfe4;border-radius:2px"></div>
<svg class="ic" style="left:31.5px;top:141px;" width="13" height="13" viewBox="0 0 16 16"><rect x="1.5" y="1" width="13.5" height="14" fill="#fafbfe" stroke="#3d4f90" stroke-width=".9"/><rect x="1.5" y="1" width="13.5" height="3.2" fill="#1f2f98"/><path d="M14.5 4v11" stroke="#2a3a7a" stroke-width="1.3"/><path d="M7.5 3.5l1 2.2 2.3.3-1.7 1.6.4 2.3-2-1.1-2 1.1.4-2.3z" fill="#f6d23c" stroke="#b08a14" stroke-width=".4"/><path d="M11.3 6l.7 1.4 1.5.2-1.1 1 .3 1.5-1.4-.8-1.4.8.3-1.5z" fill="#f6d23c" stroke="#b08a14" stroke-width=".3"/><circle cx="6.5" cy="12" r="2.7" fill="#2f9a8a" stroke="#1a5a6a" stroke-width=".7"/><path d="M5 11c1 .6 2 .6 3 0" stroke="#bfe8e0" stroke-width=".8" fill="none"/><path d="M2.6 10.5l-1.6 1.6 1.6 1.6M10.3 10.5l1.6 1.6-1.6 1.6" fill="none" stroke="#30343c" stroke-width=".9"/></svg>
<span class="t" style="left:47.3px;top:140.8px;font-weight:bold;font-size:10.5px;-webkit-text-stroke:.25px #000">1</span>
<div style="left:6px;top:551px;width:41px;height:13px;background:#fff"></div>
<svg class="ic" style="left:10px;top:551.5px;" width="12.5" height="12.5" viewBox="0 0 16 16"><rect x="5.5" y="1.5" width="9.5" height="9.5" fill="url(#gWin)" stroke="#4f74b8" stroke-width="1"/><rect x="5.5" y="1.5" width="9.5" height="3" fill="url(#gTit)" stroke="#3560b4" stroke-width="1"/><path d="M1 4h4l1 1.2h3v4.8H1z" fill="url(#gFold)" stroke="#b98a1c" stroke-width=".7"/><circle cx="9.5" cy="9.5" r="3" fill="#d9ecfb" fill-opacity=".85" stroke="#5a86c8" stroke-width="1.1"/><path d="M11.8 11.8l3 3" stroke="#c8922a" stroke-width="1.8"/></svg>
<span class="t" style="left:26px;top:551.8px;">解..</span>
<svg class="ic" style="left:50.5px;top:551.5px;" width="12.5" height="12.5" viewBox="0 0 16 16"><rect x="1.5" y="1.5" width="13" height="10.5" fill="url(#gWin)" stroke="#4f74b8" stroke-width="1"/><rect x="1.5" y="1.5" width="13" height="3" fill="url(#gTit)" stroke="#3560b4" stroke-width="1"/><path d="M3 5.5l2.5-1.5 2.5 1.5v2.5l-2.5 1.5-2.5-1.5z" fill="#f0cc4e" stroke="#b08a14" stroke-width=".6"/><path d="M9.5 8l2.5-2.5 2.5 2.5-2.5 2.5z" fill="#d86fe0" stroke="#8f3a9a" stroke-width=".6"/><path d="M9 12l2 2.5 3-2" fill="none" stroke="#3f7fe0" stroke-width="1.5"/></svg>
<span class="t" style="left:67px;top:551.8px;color:#fff">类..</span>
<svg class="ic" style="left:91px;top:551.5px;" width="12.5" height="12.5" viewBox="0 0 16 16"><rect x="1.5" y="1.5" width="12.5" height="10" fill="url(#gWin)" stroke="#4f74b8" stroke-width="1"/><rect x="1.5" y="1.5" width="12.5" height="3" fill="url(#gTit)" stroke="#3560b4" stroke-width="1"/><rect x="5.5" y="8.5" width="9.5" height="6" fill="#dfe4ec" stroke="#8d96a6" stroke-width=".8"/><path d="M7 10.5h6.5M7 12.5h6.5" stroke="#8d96a6" stroke-width=".8"/></svg>
<span class="t" style="left:108px;top:551.8px;color:#fff">属..</span>
<svg class="ic" style="left:131px;top:551.5px;" width="12.5" height="12.5" viewBox="0 0 16 16"><rect x="1.5" y="1.5" width="10.5" height="10" fill="url(#gWin)" stroke="#4f74b8" stroke-width="1"/><rect x="1.5" y="1.5" width="10.5" height="3" fill="url(#gTit)" stroke="#3560b4" stroke-width="1"/><rect x="6.5" y="8" width="2.4" height="7" rx="1" fill="#3f7fe0" stroke="#1f4fa8" stroke-width=".6"/><rect x="9.5" y="6.5" width="2.4" height="8.5" rx="1" fill="#4fb24a" stroke="#2a7a28" stroke-width=".6"/><rect x="12.5" y="7.5" width="2.4" height="7.5" rx="1" fill="#e2703a" stroke="#a8481c" stroke-width=".6"/></svg>
<span class="t" style="left:148px;top:551.8px;color:#fff">团..</span>
<svg class="ic" style="left:177px;top:551.5px;" width="12.5" height="12.5" viewBox="0 0 16 16"><rect x="1.5" y="1.5" width="12.5" height="11" fill="url(#gWin)" stroke="#4f74b8" stroke-width="1"/><rect x="1.5" y="1.5" width="12.5" height="3" fill="url(#gTit)" stroke="#3560b4" stroke-width="1"/><rect x="4" y="6" width="6" height="4.5" fill="#f4d660"/><rect x="10.5" y="10.5" width="4.5" height="4.5" fill="#3d3f7a" stroke="#20224a" stroke-width=".6"/></svg>
<span class="t" style="left:193px;top:551.8px;color:#fff">代码定义窗口</span>
<svg class="ic" style="left:261px;top:551.5px;" width="12.5" height="12.5" viewBox="0 0 16 16"><rect x="1.5" y="1.5" width="13" height="12.5" fill="#e9f0fb" stroke="#3f62b0" stroke-width="1.2"/><rect x="1.5" y="1.5" width="13" height="2.5" fill="url(#gTit)"/><path d="M4 7h8M4 9.5h8M4 12h6" stroke="#4f74b8" stroke-width="1"/></svg>
<span class="t" style="left:276.5px;top:551.8px;color:#fff">输出</span>
<div style="left:300px;top:551px;width:63.5px;height:13px;background:#fff"></div>
<svg class="ic" style="left:305px;top:551.5px;" width="12.5" height="12.5" viewBox="0 0 16 16"><rect x="1.5" y="2.5" width="13" height="11" fill="#f3f7fd" stroke="#3d63ad" stroke-width="1.2"/><rect x="1.5" y="2.5" width="13" height="1.6" fill="#6d93d8"/><path d="M3.5 6.5l2.2 1.6-2.2 1.6" fill="none" stroke="#20242c" stroke-width="1.1"/></svg>
<span class="t" style="left:320.5px;top:551.8px;">命令窗口</span>
<div style="left:173px;top:84px;width:65.5px;height:18.5px;background:linear-gradient(180deg,#fdfdfe 0,#eef1f6 48%,#d9dfea 52%,#d0d7e4 100%);border-radius:3px 3px 0 0"></div>
<span class="t" style="left:176px;top:87px;font-size:10.6px;line-height:14px">源1.cpp*</span>
<svg class="ic" style="left:225px;top:90px" width="7.5" height="7.5" viewBox="0 0 7.5 7.5"><path d="M.500 .500l6.5 6.5M7 .500L.500 7" stroke="#5a6272" stroke-width="1.1"/></svg>
<svg class="ic" style="left:1080px;top:91.5px" width="6" height="3.5" viewBox="0 0 6 3.5"><path d="M0 0h6L3.0 3.5z" fill="#d0d6e2"/></svg>
<div style="left:173px;top:102px;width:918px;height:3px;background:#ced5e3"></div>
<div style="left:173px;top:105px;width:918px;height:1.5px;background:#4f5c74"></div>
<div style="left:173px;top:106.5px;width:918px;height:17px;background:#f1f3f7"></div>
<div style="left:631.7px;top:106.5px;width:1.6px;height:17px;background:#58647c"></div>
<span class="t" style="left:192px;top:108.5px;">(未知范围)</span>
<svg class="ic" style="left:624.5px;top:114.5px" width="5" height="3" viewBox="0 0 5 3"><path d="M0 0h5L2.5 3z" fill="#1a1a1a"/></svg>
<svg class="ic" style="left:1082.5px;top:114.5px" width="5" height="3" viewBox="0 0 5 3"><path d="M0 0h5L2.5 3z" fill="#1a1a1a"/></svg>
<div style="left:173px;top:123.5px;width:918px;height:1.5px;background:#56647e"></div>
<div style="left:173px;top:125px;width:918px;height:278px;background:#fff"></div>
<div style="left:173px;top:125px;width:14.5px;height:265px;background:#e8e9ed"></div>
<div style="left:188.5px;top:125px;width:4.5px;height:118px;background:#f4e566"></div>
<div style="left:195.5px;top:142px;width:7px;height:7px;border:1px solid #9a9a9a;background:#fff"><div style="left:1px;top:2px;width:3px;height:1px;background:#555"></div></div>
<div style="left:198.5px;top:149px;width:1px;height:93.5px;background:#a8a8a8"></div>
<div style="left:198.5px;top:242px;width:4px;height:1px;background:#a8a8a8"></div>
<pre id="code" style="left:226.5px;top:126.5px"><span class="k">#include</span> <span class="s">&lt;stdio.h&gt;</span>
<span class="k">void</span> main()
{ <span class="k">int</span> a[10]={1, 2, 3, 7, 9, 0, -5, 4, 6, 8};
  <span class="k">int</span> *p1=a, *p2;
  p2=&amp;a[8];
  p1=p1+2;
  printf(<span class="s">"%d\n"</span>, p2-p1);
  printf(<span class="s">"%d\n"</span>, *p1+*p2);
}</pre>
<div style="left:1078px;top:125px;width:13px;height:265px;background:#f0f0f0"></div>
<div style="left:1078px;top:125px;width:13px;height:14px;background:#dfe5ef;border:1px solid #c4ccda"></div>
<svg class="ic" style="left:1080.5px;top:126.5px" width="8" height="11" viewBox="0 0 8 11"><path d="M0 4.5h8M0 6.5h8" stroke="#1a1a1a" stroke-width="1"/><path d="M4 0l2.5 3h-5zM4 11l2.5-3h-5z" fill="#1a1a1a"/><path d="M4 2v7" stroke="#1a1a1a" stroke-width="1"/></svg>
<svg class="ic" style="left:1082px;top:144.5px" width="5" height="3" viewBox="0 0 5 3"><path d="M0 3h5L2.5 0z" fill="#8a8f98"/></svg>
<div style="left:1079px;top:153px;width:11px;height:159px;background:linear-gradient(90deg,#f4f4f4 0,#e2e3e5 50%,#d2d3d6 100%);border:1px solid #b4b6ba;border-radius:2px"></div>
<div style="left:1081.5px;top:229.5px;width:6px;height:1px;background:#8a8f98"></div>
<div style="left:1081.5px;top:231.5px;width:6px;height:1px;background:#8a8f98"></div>
<div style="left:1081.5px;top:233.5px;width:6px;height:1px;background:#8a8f98"></div>
<svg class="ic" style="left:1082px;top:380.5px" width="5" height="3" viewBox="0 0 5 3"><path d="M0 0h5L2.5 3z" fill="#60656e"/></svg>
<div style="left:173px;top:390px;width:905px;height:13px;background:#f0f0f0"></div>
<div style="left:173px;top:390px;width:48.5px;height:13px;background:#fff;border-right:1px solid #e0e0e0"></div>
<span class="t" style="left:176.5px;top:389.5px;font-size:9.3px">100 %</span>
<svg class="ic" style="left:214.5px;top:396px" width="4.5" height="2.8" viewBox="0 0 4.5 2.8"><path d="M0 0h4.5L2.25 2.8z" fill="#1a1a1a"/></svg>
<svg class="ic" style="left:226.5px;top:394.5px" width="3" height="5" viewBox="0 0 3 5"><path d="M3 0v5L0 2.5z" fill="#8a8f98"/></svg>
<svg class="ic" style="left:1068.5px;top:394.5px" width="3" height="5" viewBox="0 0 3 5"><path d="M0 0v5L3 2.5z" fill="#60656e"/></svg>
<div style="left:1078px;top:390px;width:13px;height:13px;background:#fff"></div>
<div style="left:173px;top:403px;width:918px;height:3.5px;background:linear-gradient(180deg,#e4e9f2,#c5cfe0)"></div>
<div style="left:173px;top:412px;width:918px;height:16.5px;background:linear-gradient(180deg,#fff8e1 0,#ffeab0 50%,#ffe29a 100%);border-radius:2px 2px 0 0"></div>
<span class="t" style="left:174px;top:413.5px;">命令窗口</span>
<svg class="ic" style="left:1053px;top:419px" width="6" height="3.5" viewBox="0 0 6 3.5"><path d="M0 0h6L3.0 3.5z" fill="#1a1a1a"/></svg>
<svg class="ic" style="left:1066px;top:415px" width="7" height="10" viewBox="0 0 7 10"><path d="M2 .500h3v5h-3zM.500 5.5h6M3.5 5.5v4" fill="none" stroke="#1a1a1a" stroke-width="1"/><path d="M4.5 1v4" stroke="#1a1a1a" stroke-width="1"/></svg>
<svg class="ic" style="left:1078.5px;top:416.5px" width="7.5" height="7" viewBox="0 0 7.5 7"><path d="M.500 .300l6.5 6.4M7 .300L.500 6.7" stroke="#1a1a1a" stroke-width="1.1"/></svg>
<div style="left:173px;top:428.5px;width:918px;height:122.5px;background:#fff"></div>
<svg class="ic" style="left:174.5px;top:429.5px" width="5" height="8" viewBox="0 0 5 8"><path d="M.500 .500l4 3.5-4 3.5" fill="none" stroke="#222" stroke-width=".9"/></svg>
<span class="t" style="left:174px;top:427px;color:transparent;font-size:9px">&gt;</span>
<div style="left:1078px;top:428.5px;width:13px;height:109.5px;background:#f0f0f0"></div>
<svg class="ic" style="left:1082px;top:433.5px" width="5" height="3" viewBox="0 0 5 3"><path d="M0 3h5L2.5 0z" fill="#60656e"/></svg>
<svg class="ic" style="left:1082px;top:528px" width="5" height="3" viewBox="0 0 5 3"><path d="M0 0h5L2.5 3z" fill="#60656e"/></svg>
<div style="left:173px;top:538px;width:905px;height:13px;background:#f0f0f0"></div>
<svg class="ic" style="left:177px;top:542px" width="3" height="5" viewBox="0 0 3 5"><path d="M3 0v5L0 2.5z" fill="#8a8f98"/></svg>
<svg class="ic" style="left:1068.5px;top:542px" width="3" height="5" viewBox="0 0 3 5"><path d="M0 0v5L3 2.5z" fill="#60656e"/></svg>
<div style="left:546.5px;top:412px;width:96.5px;height:20.5px;background:rgba(255,255,255,.72);border:1px solid rgba(140,140,140,.55);border-radius:3px;box-shadow:3px 2.5px 1.2px rgba(0,0,0,.45)"></div>
<span class="t" style="left:552px;top:414px;font-size:11.9px;line-height:16px;color:rgba(125,115,85,.5)">点击查看源网页</span>
<div style="left:1097px;top:84px;width:16px;height:99.5px;background:#3d5279"></div>
<div style="left:1097px;top:185px;width:16px;height:50px;background:#3d5279"></div>
<svg class="ic" style="left:1099.5px;top:86px;" width="12.5" height="12.5" viewBox="0 0 16 16"><rect x="1.5" y="5.5" width="4" height="9.5" fill="#9fc2f4" stroke="#3f6fc8" stroke-width=".8"/><rect x="6" y="1.5" width="4.5" height="13.5" fill="#cfe0fb" stroke="#3f6fc8" stroke-width=".8"/><rect x="10.5" y="3.5" width="4.5" height="11.5" fill="#3f7fe0" stroke="#1f4fa8" stroke-width=".8"/><path d="M7 4h2.5M7 6h2.5" stroke="#3f6fc8" stroke-width=".7"/></svg>
<svg class="ic" style="left:1099.5px;top:187px;" width="12.5" height="12.5" viewBox="0 0 16 16"><path d="M2 2l11 12" stroke="#d8323a" stroke-width="1.8" stroke-linecap="round"/><path d="M14 2.5L4 14" stroke="#dfe4ec" stroke-width="1.5" stroke-linecap="round"/><path d="M11 1.5c2-1 4 0 4 2l-2-.5-1 1.5z" fill="#dfe4ec"/><path d="M10 13l3.5-2.5 1.5 2-3 2z" fill="#c3c9d4"/></svg>
<span class="t w" style="left:1096.2px;top:103px;width:16px;line-height:16px;font-size:9.750px;writing-mode:vertical-rl;text-orientation:sideways">服务器资源管理器</span>
<span class="t w" style="left:1096.2px;top:203.5px;width:16px;line-height:16px;font-size:9.6px;writing-mode:vertical-rl;text-orientation:sideways">工具箱</span>
<div style="left:1px;top:564px;width:1112px;height:24.7px;background:#3aa640"></div>
<span class="t" style="left:905.5px;top:567px;font-family:'Liberation Serif','Noto Serif CJK SC',serif;font-size:12px;line-height:16px;color:#000;text-shadow:0 0 .500px rgba(0,0,0,.7)"><span style="letter-spacing:.420px">http://www.hackhome.com[</span>网侠<span style="letter-spacing:2px">]</span>提供</span>
</div>
</body>
</html>
